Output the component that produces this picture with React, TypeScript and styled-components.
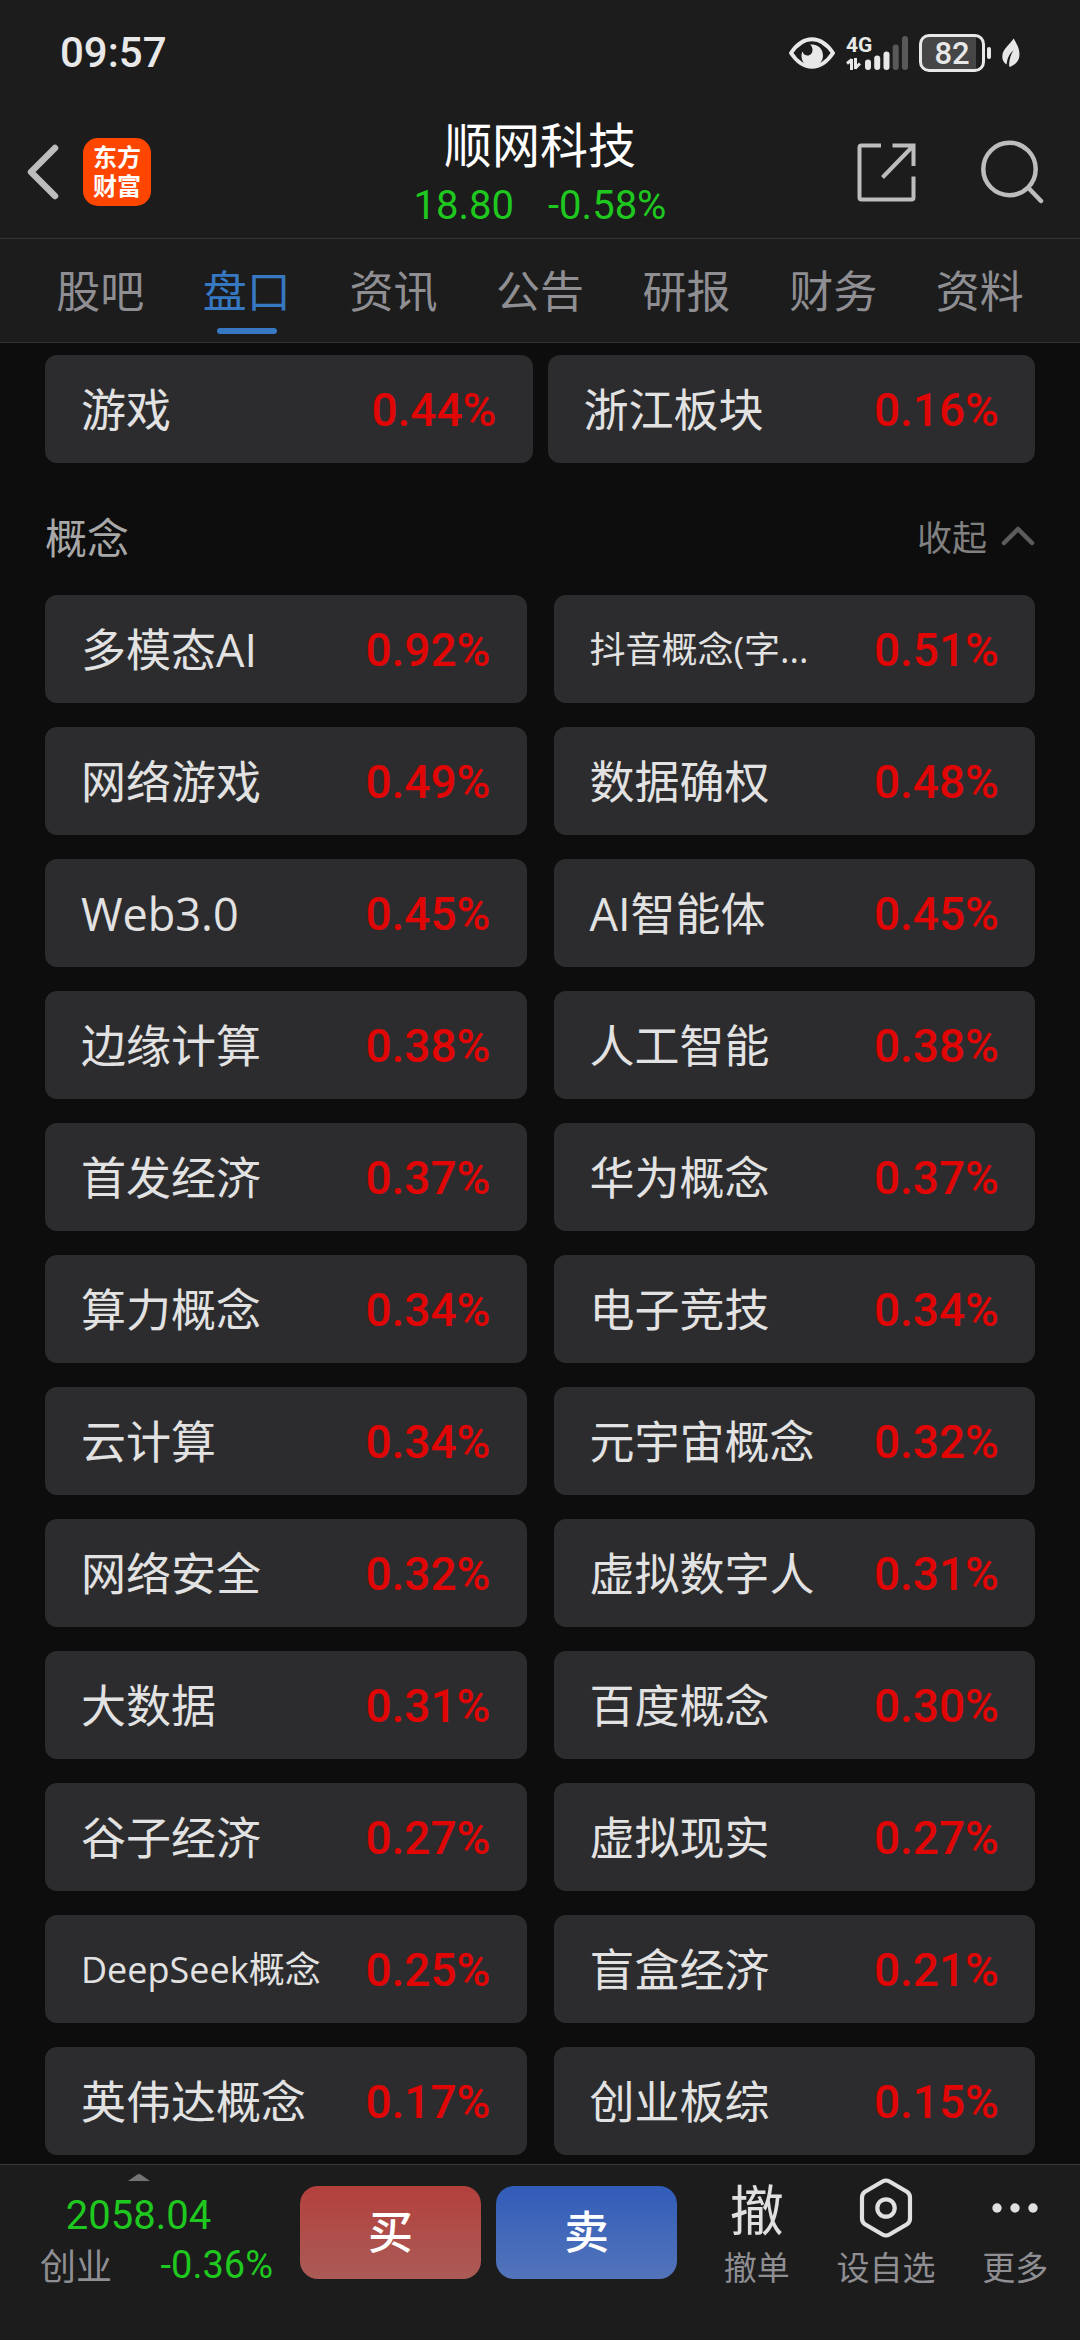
import React from "react";
import styled, { createGlobalStyle } from "styled-components";

const GlobalStyle = createGlobalStyle`
  *, *::before, *::after { box-sizing: border-box; }
  body {
    margin: 0;
    background: #0d0d0d;
    color: #e2e2e2;
    font-family: "Open Sans", "Noto Sans CJK SC", sans-serif;
  }
  button {
    margin: 0;
    padding: 0;
    border: 0;
    background: none;
    color: inherit;
    font: inherit;
    cursor: pointer;
  }
  h1, h2, p { margin: 0; font-weight: 400; }
  svg { display: block; }
`;

const numeric = `Roboto, "Noto Sans CJK SC", sans-serif`;

const Page = styled.div`
  display: flex;
  flex-direction: column;
  min-height: 100vh;
`;

const TopArea = styled.header`
  background: #1c1c1c;
`;

const StatusBar = styled.div`
  display: flex;
  align-items: center;
  justify-content: space-between;
  height: 106px;
  padding: 0 60px;
`;

const Clock = styled.time`
  color: #e8e8e8;
  font: 500 42px/50px ${numeric};
`;

const StatusIcons = styled.div`
  display: flex;
  align-items: center;
  gap: 11px;
`;

const Network = styled.div`
  display: flex;
  align-items: flex-end;
`;

const NetworkType = styled.div`
  display: flex;
  flex-direction: column;
  width: 19px;
  gap: 4px;
  color: #e8e8e8;
  font: 700 21px/18px ${numeric};
  white-space: nowrap;
`;

const Battery = styled.div`
  display: flex;
  align-items: center;
  gap: 2px;

  &::after {
    content: "";
    width: 4px;
    height: 12px;
    border-radius: 2px;
    background: #e8e8e8;
  }
`;

const BatteryBody = styled.div<{ $level: number }>`
  width: 66px;
  height: 38px;
  border: 3px solid #e8e8e8;
  border-radius: 10px;
  background: linear-gradient(to right, #464646 ${(p) => p.$level}%, #1c1c1c ${(p) => p.$level}%);
  color: #e8e8e8;
  font: 500 31px/33px ${numeric};
  text-align: center;
`;

const TitleBar = styled.div`
  display: grid;
  grid-template-columns: 1fr auto 1fr;
  align-items: center;
  height: 133px;
  padding: 0 27px;
  border-bottom: 1px solid #353535;
`;

const LeftTools = styled.div`
  display: flex;
  align-items: center;
  gap: 24px;
`;

const RightTools = styled.div`
  display: flex;
  align-items: center;
  justify-content: flex-end;
  gap: 65px;
  padding-right: 9px;
`;

const Logo = styled.button`
  width: 68px;
  height: 68px;
  border-radius: 15px;
  background: #ff4600;
  color: #fff;
  font: 700 24px/29px "Liberation Sans", "Noto Sans CJK SC", sans-serif;
`;

const StockTitle = styled.div`
  display: grid;
  gap: 4px;
  padding-top: 4px;
  text-align: center;
`;

const StockName = styled.h1`
  color: #fff;
  font: 400 48px/60px "Noto Sans CJK SC", sans-serif;
`;

const StockQuote = styled.p`
  display: flex;
  justify-content: center;
  gap: 34px;
  color: #1fc81f;
  font: 400 40px/60px ${numeric};
`;

const Tabs = styled.nav`
  display: flex;
  height: 104px;
  padding: 0 27px;
  border-bottom: 1px solid #353535;
`;

const Tab = styled.a<{ $active?: boolean }>`
  display: flex;
  flex: 1;
  flex-direction: column;
  align-items: center;
  justify-content: flex-end;
  gap: 6px;
  padding-bottom: 8px;
  color: ${(p) => (p.$active ? "#3778c2" : "#8e8e93")};
  font: 400 44px/66px "Noto Sans CJK SC", sans-serif;
  text-decoration: none;

  &::after {
    content: "";
    width: 60px;
    height: 6px;
    border-radius: 3px;
    background: ${(p) => (p.$active ? "#3778c2" : "transparent")};
  }
`;

const Content = styled.main`
  flex: 1;
  padding: 12px 45px 9px;
`;

const CardGrid = styled.div<{ $gap: number }>`
  display: grid;
  grid-template-columns: 1fr 1fr;
  gap: 24px ${(p) => p.$gap}px;
`;

const Card = styled.button`
  display: flex;
  align-items: center;
  justify-content: space-between;
  min-width: 0;
  height: 108px;
  padding: 1px 36px 0;
  border-radius: 12px;
  background: #2c2c2e;
`;

const CardName = styled.span<{ $small?: boolean }>`
  color: #e2e2e2;
  font-size: ${(p) => (p.$small ? 36 : 45)}px;
  line-height: 66px;
  white-space: nowrap;
`;

const CardChange = styled.span`
  color: #e00606;
  font: 500 46px/66px ${numeric};
`;

const SectionHead = styled.div`
  display: flex;
  align-items: center;
  justify-content: space-between;
  padding: 43px 0 29px;
`;

const SectionTitle = styled.h2`
  color: #a8a8a8;
  font: 400 42px/60px "Noto Sans CJK SC", sans-serif;
`;

const Collapse = styled.button`
  display: flex;
  align-items: center;
  gap: 14px;
  color: #808080;
  font: 400 35px/60px "Noto Sans CJK SC", sans-serif;
`;

const BottomBar = styled.footer`
  display: grid;
  grid-template-columns: 285fr 181fr 181fr 388fr;
  align-items: start;
  gap: 15px;
  height: 176px;
  border-top: 1px solid #3a3a3a;
  background: #1c1c1c;
`;

const IndexQuote = styled.button`
  display: flex;
  flex-direction: column;
  align-items: center;
  padding: 9px 8px 0 0;
  color: #1fc81f;
  font: 400 40px/50px ${numeric};
`;

const IndexValue = styled.span`
  padding-top: 10px;
`;

const IndexRow = styled.span`
  display: flex;
  justify-content: space-between;
  width: 100%;
  padding: 0 4px 0 40px;
  font-size: 38px;
  line-height: 48px;
`;

const IndexName = styled.span`
  color: #8e8e93;
  font: 400 36px/46px "Noto Sans CJK SC", sans-serif;
`;

const TradeButton = styled.button<{ $from: string; $to: string }>`
  height: 93px;
  margin-top: 21px;
  padding-bottom: 6px;
  border-radius: 18px;
  background: linear-gradient(${(p) => p.$from}, ${(p) => p.$to});
  color: #fff;
  font: 500 45px/66px "Noto Sans CJK SC", sans-serif;
`;

const Actions = styled.div`
  display: grid;
  grid-template-columns: repeat(3, 1fr);
`;

const Action = styled.button`
  display: flex;
  flex-direction: column;
  align-items: center;
  padding-top: 9px;
  color: #8e8e93;
  font: 400 33px/48px "Noto Sans CJK SC", sans-serif;
`;

const ActionIcon = styled.span`
  display: flex;
  align-items: center;
  justify-content: center;
  height: 68px;
  color: #e0e0e0;
  font-size: 54px;
`;

type Item = { name: string; change: string; small?: boolean };

const tabs = ["股吧", "盘口", "资讯", "公告", "研报", "财务", "资料"];

const sectors: Item[] = [
  { name: "游戏", change: "0.44%" },
  { name: "浙江板块", change: "0.16%" },
];

const concepts: Item[] = [
  { name: "多模态AI", change: "0.92%" },
  { name: "抖音概念(字...", change: "0.51%", small: true },
  { name: "网络游戏", change: "0.49%" },
  { name: "数据确权", change: "0.48%" },
  { name: "Web3.0", change: "0.45%" },
  { name: "AI智能体", change: "0.45%" },
  { name: "边缘计算", change: "0.38%" },
  { name: "人工智能", change: "0.38%" },
  { name: "首发经济", change: "0.37%" },
  { name: "华为概念", change: "0.37%" },
  { name: "算力概念", change: "0.34%" },
  { name: "电子竞技", change: "0.34%" },
  { name: "云计算", change: "0.34%" },
  { name: "元宇宙概念", change: "0.32%" },
  { name: "网络安全", change: "0.32%" },
  { name: "虚拟数字人", change: "0.31%" },
  { name: "大数据", change: "0.31%" },
  { name: "百度概念", change: "0.30%" },
  { name: "谷子经济", change: "0.27%" },
  { name: "虚拟现实", change: "0.27%" },
  { name: "DeepSeek概念", change: "0.25%", small: true },
  { name: "盲盒经济", change: "0.21%" },
  { name: "英伟达概念", change: "0.17%" },
  { name: "创业板综", change: "0.15%" },
];

const EyeIcon = () => (
  <svg width="46" height="32" viewBox="0 0 46 32" fill="none">
    <path d="M2 16C8 7 15 2.200 23 2.200S38 7 44 16C38 25 31 29.800 23 29.800S8 25 2 16Z" stroke="#e8e8e8" strokeWidth="4" strokeLinejoin="round" />
    <path d="M21 7.500C29 6.500 34 12 34 18.500C34 24 30 30 23 30C17 30 12.500 25 12.500 19C12.500 17 13 15.500 13.500 14.500C14.500 17.500 16.500 18.500 18.500 18.500C21.500 18.500 23.500 16 23.500 13C23.500 10.500 22.500 8.500 21 7.500Z" fill="#e8e8e8" />
  </svg>
);

const DataArrows = () => (
  <svg width="15" height="12" viewBox="0 0 15 12" fill="none" stroke="#e8e8e8" strokeWidth="3">
    <path d="M5.500 12V1M6 1.500L1 5.500" />
    <path d="M9.500 0V11M9 10.500L14 5.500" />
  </svg>
);

const SignalBars = () => (
  <svg width="43" height="34" viewBox="0 0 43 34">
    <rect x="0" y="23.500" width="6" height="10.500" rx="3" fill="#e8e8e8" />
    <rect x="9.200" y="19.500" width="6" height="14.500" rx="3" fill="#e8e8e8" />
    <rect x="18.500" y="15.500" width="6" height="18.500" rx="3" fill="#e8e8e8" />
    <rect x="27.700" y="8.500" width="6" height="25.500" rx="3" fill="#595959" />
    <rect x="37" y="0" width="6" height="34" rx="3" fill="#595959" />
  </svg>
);

const LeafIcon = () => (
  <svg width="18" height="30" viewBox="0 0 18 30">
    <path d="M11.700 .500C14 5 17.500 10 17.500 16C17.500 22.500 14.500 26 8.500 28.700C7 29 7 27.500 7.200 25.500C7.500 20.500 9 16 11.500 12.500C7.500 15.500 5.300 20 4.600 26.500C1.500 24.500 .300 22 .300 18.500C.300 11 7.500 7 11.700 .500Z" fill="#e8e8e8" />
  </svg>
);

const BackIcon = () => (
  <svg width="32" height="56" viewBox="0 0 32 56" fill="none" stroke="#bdbdbd" strokeWidth="6.500" strokeLinecap="round" strokeLinejoin="round">
    <path d="M28 4L4 28L28 52" />
  </svg>
);

const ShareIcon = () => (
  <svg width="59" height="59" viewBox="0 0 59 59" fill="none" stroke="#bdbdbd" strokeWidth="4">
    <path d="M24 2.500H4.500Q2.500 2.500 2.500 4.500V54.500Q2.500 56.500 4.500 56.500H54.500Q56.500 56.500 56.500 54.500V33.500" />
    <path d="M35.500 2.500H56.500V23M56 3L25.500 34.500" />
  </svg>
);

const SearchIcon = () => (
  <svg width="63" height="64" viewBox="0 0 63 64" fill="none" stroke="#bdbdbd" strokeWidth="4.500" strokeLinecap="round">
    <circle cx="28.500" cy="29" r="26.200" />
    <path d="M47.500 48L60 61" />
  </svg>
);

const ChevronUp = () => (
  <svg width="34" height="20" viewBox="0 0 34 20" fill="none" stroke="#5c5c5c" strokeWidth="4.500" strokeLinecap="round" strokeLinejoin="round">
    <path d="M3 17L17 3L31 17" />
  </svg>
);

const ExpandMark = () => (
  <svg width="22" height="7" viewBox="0 0 22 7">
    <path d="M0 7L9 .700Q11 -.500 13 .700L22 7Z" fill="#737376" />
  </svg>
);

const HexagonIcon = () => (
  <svg width="54" height="60" viewBox="0 0 54 60" fill="none" stroke="#e0e0e0" strokeWidth="4.200">
    <path d="M23.500 3.500Q27 1.500 30.500 3.500L48 13.800Q51 15.800 51 19.500V40.500Q51 44.200 48 46.200L30.500 56.500Q27 58.500 23.500 56.500L6 46.200Q3 44.200 3 40.500V19.500Q3 15.800 6 13.800Z" />
    <circle cx="27" cy="30" r="8.700" />
  </svg>
);

const MoreIcon = () => (
  <svg width="46" height="10" viewBox="0 0 46 10" fill="#e0e0e0">
    <circle cx="5" cy="5" r="4.700" />
    <circle cx="23" cy="5" r="4.700" />
    <circle cx="41" cy="5" r="4.700" />
  </svg>
);

const CardList = ({ items, gap }: { items: Item[]; gap: number }) => (
  <CardGrid $gap={gap}>
    {items.map((item) => (
      <Card key={item.name}>
        <CardName $small={item.small}>{item.name}</CardName>
        <CardChange>{item.change}</CardChange>
      </Card>
    ))}
  </CardGrid>
);

export default function App() {
  return (
    <Page>
      <GlobalStyle />
      <TopArea>
        <StatusBar>
          <Clock>09:57</Clock>
          <StatusIcons>
            <EyeIcon />
            <Network>
              <NetworkType>
                4G
                <DataArrows />
              </NetworkType>
              <SignalBars />
            </Network>
            <Battery>
              <BatteryBody $level={90}>82</BatteryBody>
            </Battery>
            <LeafIcon />
          </StatusIcons>
        </StatusBar>
        <TitleBar>
          <LeftTools>
            <button aria-label="返回">
              <BackIcon />
            </button>
            <Logo>
              东方
              <br />
              财富
            </Logo>
          </LeftTools>
          <StockTitle>
            <StockName>顺网科技</StockName>
            <StockQuote>
              <span>18.80</span>
              <span>-0.58%</span>
            </StockQuote>
          </StockTitle>
          <RightTools>
            <button aria-label="分享">
              <ShareIcon />
            </button>
            <button aria-label="搜索">
              <SearchIcon />
            </button>
          </RightTools>
        </TitleBar>
        <Tabs>
          {tabs.map((tab) => (
            <Tab key={tab} href="#" $active={tab === "盘口"}>
              {tab}
            </Tab>
          ))}
        </Tabs>
      </TopArea>
      <Content>
        <CardList items={sectors} gap={15} />
        <SectionHead>
          <SectionTitle>概念</SectionTitle>
          <Collapse>
            收起
            <ChevronUp />
          </Collapse>
        </SectionHead>
        <CardList items={concepts} gap={27} />
      </Content>
      <BottomBar>
        <IndexQuote>
          <ExpandMark />
          <IndexValue>2058.04</IndexValue>
          <IndexRow>
            <IndexName>创业</IndexName>
            <span>-0.36%</span>
          </IndexRow>
        </IndexQuote>
        <TradeButton $from="#b3403c" $to="#ab5b57">买</TradeButton>
        <TradeButton $from="#315cb8" $to="#5374ba">卖</TradeButton>
        <Actions>
          <Action>
            <ActionIcon>撤</ActionIcon>
            撤单
          </Action>
          <Action>
            <ActionIcon>
              <HexagonIcon />
            </ActionIcon>
            设自选
          </Action>
          <Action>
            <ActionIcon>
              <MoreIcon />
            </ActionIcon>
            更多
          </Action>
        </Actions>
      </BottomBar>
    </Page>
  );
}
